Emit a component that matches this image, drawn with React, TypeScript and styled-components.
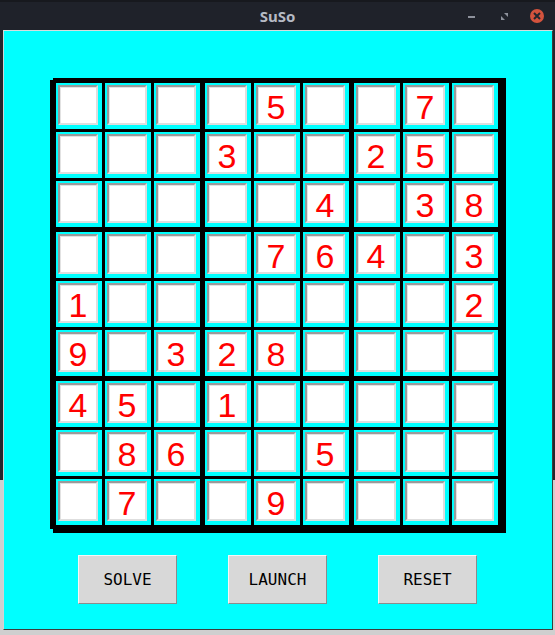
import React from 'react';
import styled, { createGlobalStyle } from 'styled-components';

const puzzle: string[] = [
  '000050070',
  '000300250',
  '000004038',
  '000076403',
  '100000002',
  '903280000',
  '450100000',
  '086005000',
  '070090000',
];

const GlobalStyle = createGlobalStyle`
  html, body {
    margin: 0;
    padding: 0;
    background: linear-gradient(to bottom, #23262d 0, #23262d 480px, #cfcfcf 480px);
  }
  body {
    width: 555px;
    height: 635px;
    overflow: hidden;
  }
`;

const Window = styled.div`
  width: 555px;
  height: 635px;
  display: flex;
  flex-direction: column;
`;

const TitleBar = styled.div`
  height: 30px;
  flex: none;
  box-sizing: border-box;
  border-top: 2px solid #17191e;
  background: #1f222a;
  display: grid;
  grid-template-columns: 1fr auto 1fr;
  align-items: center;
`;

const Title = styled.div`
  grid-column: 2;
  font-family: 'Noto Sans', 'DejaVu Sans', sans-serif;
  font-weight: bold;
  font-size: 15px;
  color: #b6bac4;
`;

const Controls = styled.div`
  grid-column: 3;
  justify-self: end;
  display: flex;
  align-items: center;
  padding-right: 11px;
`;

const MinimizeIcon = styled.div`
  width: 7px;
  height: 2px;
  background: #8d919b;
  margin-right: 26px;
  margin-top: 2px;
`;

const MaximizeIcon = styled.svg`
  width: 7px;
  height: 7px;
  margin-right: 22px;
`;

const CloseButton = styled.div`
  width: 14px;
  height: 14px;
  border-radius: 50%;
  background: #d4533d;
  display: flex;
  align-items: center;
  justify-content: center;
`;

const Content = styled.div`
  margin-left: 3px;
  width: 550px;
  height: 600px;
  box-sizing: border-box;
  background: #00ffff;
  border-top: 1px solid #d6dede;
  border-left: 1px solid #cfd6d6;
  border-right: 1px solid #3c3c3c;
  border-bottom: 1px solid #3c3c3c;
  padding: 49px 0 0 46px;
  display: flex;
  flex-direction: column;
  align-items: flex-start;
`;

const Board = styled.div`
  background: #000;
  padding: 3px 5px 4px 6px;
  display: grid;
  grid-template-columns: repeat(3, auto);
  gap: 5px;
  box-shadow: 3px -2px 0 #000, 3px 4px 0 #000;
`;

const Box = styled.div`
  display: grid;
  grid-template-columns: repeat(3, 46px);
  grid-auto-rows: 46px;
  gap: 3px;
`;

const Cell = styled.div`
  background: #00ffff;
  padding: 2px 4px 4px 2px;
`;

const Square = styled.div`
  box-sizing: border-box;
  width: 40px;
  height: 40px;
  background: #fff;
  border: 2px solid;
  border-color: #9a9a9a #dedede #dedede #9a9a9a;
  box-shadow: inset 1px 1px 0 #e2e2e2;
  display: flex;
  align-items: center;
  justify-content: center;
  font-family: 'Liberation Sans', Arial, sans-serif;
  font-size: 34px;
  line-height: 1;
  color: #ff0000;
  padding-top: 3px;
`;

const ButtonRow = styled.div`
  display: flex;
  gap: 51px;
  margin-top: 26px;
  margin-left: 28px;
`;

const PushButton = styled.button`
  width: 99px;
  height: 49px;
  box-sizing: border-box;
  background: #d8d8d8;
  border: 1px solid;
  border-color: #f6f6f6 #8c8c8c #8c8c8c #f6f6f6;
  font-family: 'DejaVu Sans Mono', monospace;
  font-size: 16px;
  color: #000;
  padding: 0;
  cursor: pointer;
`;

const App: React.FC = () => {
  const boxes = Array.from(new Array(9), (_, i) => i);
  return (
    <>
      <GlobalStyle />
      <Window>
        <TitleBar>
          <Title>SuSo</Title>
          <Controls>
            <MinimizeIcon />
            <MaximizeIcon viewBox="0 0 7 7">
              <path d="M3 0h4v4z M0 3l4 4H0z" fill="#8d919b" />
            </MaximizeIcon>
            <CloseButton>
              <svg width="8" height="8" viewBox="0 0 8 8">
                <path d="M1 1l6 6M7 1l-6 6" stroke="#23262d" strokeWidth="2" />
              </svg>
            </CloseButton>
          </Controls>
        </TitleBar>
        <Content>
          <Board>
            {boxes.map(b => (
              <Box key={b}>
                {Array.from(new Array(9), (_, k) => k).map(k => {
                  const r = Math.floor(b / 3) * 3 + Math.floor(k / 3);
                  const c = (b % 3) * 3 + (k % 3);
                  const v = puzzle[r][c];
                  return (
                    <Cell key={k}>
                      <Square>{v === '0' ? '' : v}</Square>
                    </Cell>
                  );
                })}
              </Box>
            ))}
          </Board>
          <ButtonRow>
            <PushButton>SOLVE</PushButton>
            <PushButton>LAUNCH</PushButton>
            <PushButton>RESET</PushButton>
          </ButtonRow>
        </Content>
      </Window>
    </>
  );
};

export default App;
